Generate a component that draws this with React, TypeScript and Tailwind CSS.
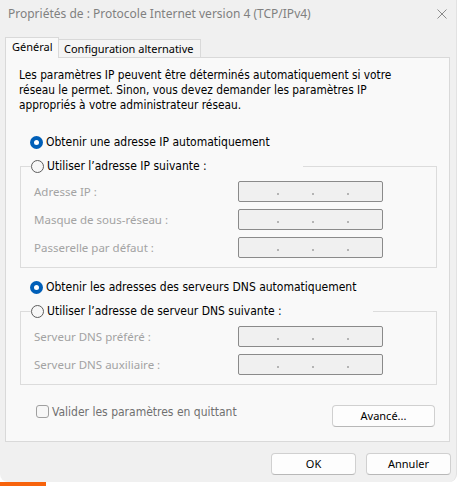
import { FC } from "react";

const ui = "[font-family:'Noto_Sans',sans-serif]";
const tah = "[font-family:'DejaVu_Sans_Condensed','DejaVu_Sans',sans-serif] [font-stretch:condensed]";

const Radio: FC<{ checked?: boolean; label: string }> = ({ checked, label }) => (
    <div className="flex items-center h-[16px]">
        {checked ? (
            <span className="w-[13px] h-[13px] shrink-0 rounded-full bg-[#005fb8] flex items-center justify-center">
                <span className="w-[5px] h-[5px] rounded-full bg-white" />
            </span>
        ) : (
            <span className="w-[13px] h-[13px] shrink-0 rounded-full border border-[#5d5d5d] bg-[#f7f7f7]" />
        )}
        <span className={`ml-[3px] text-[12px] text-black leading-none whitespace-nowrap ${tah}`}>{label}</span>
    </div>
);

const IpBox = () => (
    <div className="w-[145px] h-[21px] rounded-[2px] border border-[#8a8a8a] bg-[#f0f0f0] flex items-end pl-[38px] pb-[6px] gap-[33px]">
        <span className="w-[2px] h-[2px] bg-[#b4b4b4]" />
        <span className="w-[2px] h-[2px] bg-[#b4b4b4]" />
        <span className="w-[2px] h-[2px] bg-[#b4b4b4]" />
    </div>
);

const Row: FC<{ label: string }> = ({ label }) => (
    <div className="flex items-center h-[21px]">
        <span className={`w-[204px] text-[11.5px] text-[#a3a3a3] ${ui}`}>{label}</span>
        <IpBox />
    </div>
);

const Group: FC<{ legend: string; legendW: string; rows: string[] }> = ({ legend, legendW, rows }) => (
    <fieldset className="ml-[14px] w-[417px] border border-[#dcdcdc] pb-[9px]">
        <legend className={`ml-[10px] ${legendW}`}>
            <Radio label={legend} />
        </legend>
        <div className="flex flex-col gap-[7px] pt-[7px] pl-[13px]">
            {rows.map((r) => (
                <Row key={r} label={r} />
            ))}
        </div>
    </fieldset>
);

const Btn: FC<{ label: string; w: string }> = ({ label, w }) => (
    <button
        className={`${w} h-[22px] rounded-[4px] border border-[#d0d0d0] border-b-[#b8b8b8] bg-[#fdfdfd] text-[11px] text-black ${ui}`}
    >
        {label}
    </button>
);

export default function App() {
    return (
        <div className="w-[459px] h-[486px] bg-white overflow-hidden flex flex-col">
            <div className="w-[457px] h-[482px] bg-[#f0f0f0] rounded-b-[8px] border-r border-[#e2e2e2] flex flex-col">
                <div className="h-[27px] flex items-center justify-between pl-[8px] pr-[9px]">
                    <span className={`text-[12px] text-[#808080] ${ui}`}>
                        Propriétés de : Protocole Internet version 4 (TCP/IPv4)
                    </span>
                    <svg width="10" height="10" viewBox="0 0 10 10" className="mt-[1px]">
                        <path d="M0.5 0.5 L9.5 9.5 M9.5 0.5 L0.5 9.5" stroke="#8a8a8a" strokeWidth="1" />
                    </svg>
                </div>
                <div className="ml-[5px] mt-[10px] flex items-end h-[20px]">
                    <div className={`h-[21px] w-[54px] -mb-[1px] relative z-10 border border-b-0 border-[#d9d9d9] bg-[#f9f9f9] pl-[6px] pt-[1px] text-[11px] text-black ${ui}`}>
                        Général
                    </div>
                    <div className={`h-[18px] w-[142px] border border-b-0 border-l-0 border-[#d9d9d9] bg-[#f4f4f4] pl-[5px] text-[11px] leading-[17px] text-black ${ui}`}>
                        Configuration alternative
                    </div>
                </div>
                <div className="ml-[5px] w-[445px] h-[385px] border border-[#d9d9d9] bg-[#f9f9f9] flex flex-col">
                    <p className={`mt-[10px] pl-[13px] text-[11.8px] leading-[15px] text-black whitespace-nowrap ${tah}`}>
                        Les paramètres IP peuvent être déterminés automatiquement si votre
                        <br />
                        réseau le permet. Sinon, vous devez demander les paramètres IP
                        <br />
                        appropriés à votre administrateur réseau.
                    </p>
                    <div className="mt-[21px] ml-[24px]">
                        <Radio checked label="Obtenir une adresse IP automatiquement" />
                    </div>
                    <div className="mt-[8px]">
                        <Group
                            legend="Utiliser l’adresse IP suivante :"
                            legendW="w-[272px]"
                            rows={["Adresse IP :", "Masque de sous-réseau :", "Passerelle par défaut :"]}
                        />
                    </div>
                    <div className="mt-[11px] ml-[24px]">
                        <Radio checked label="Obtenir les adresses des serveurs DNS automatiquement" />
                    </div>
                    <div className="mt-[8px]">
                        <Group
                            legend="Utiliser l’adresse de serveur DNS suivante :"
                            legendW="w-[342px]"
                            rows={["Serveur DNS préféré :", "Serveur DNS auxiliaire :"]}
                        />
                    </div>
                    <div className="mt-[20px] flex items-start justify-between pl-[30px] pr-[14px]">
                        <div className="flex items-center h-[13px] mt-[0px]">
                            <span className="w-[13px] h-[13px] rounded-[3px] border border-[#a0a0a0] bg-[#f7f7f7]" />
                            <span className={`ml-[3px] text-[12px] text-[#707070] leading-none whitespace-nowrap ${tah}`}>
                                Valider les paramètres en quittant
                            </span>
                        </div>
                        <Btn label="Avancé..." w="w-[103px]" />
                    </div>
                </div>
                <div className="mt-[11px] flex justify-end gap-[10px] pr-[5px]">
                    <Btn label="OK" w="w-[85px]" />
                    <Btn label="Annuler" w="w-[85px]" />
                </div>
            </div>
            <div className="h-[4px] flex">
                <div className="w-[46px] bg-[#f7630c]" />
            </div>
        </div>
    );
}
